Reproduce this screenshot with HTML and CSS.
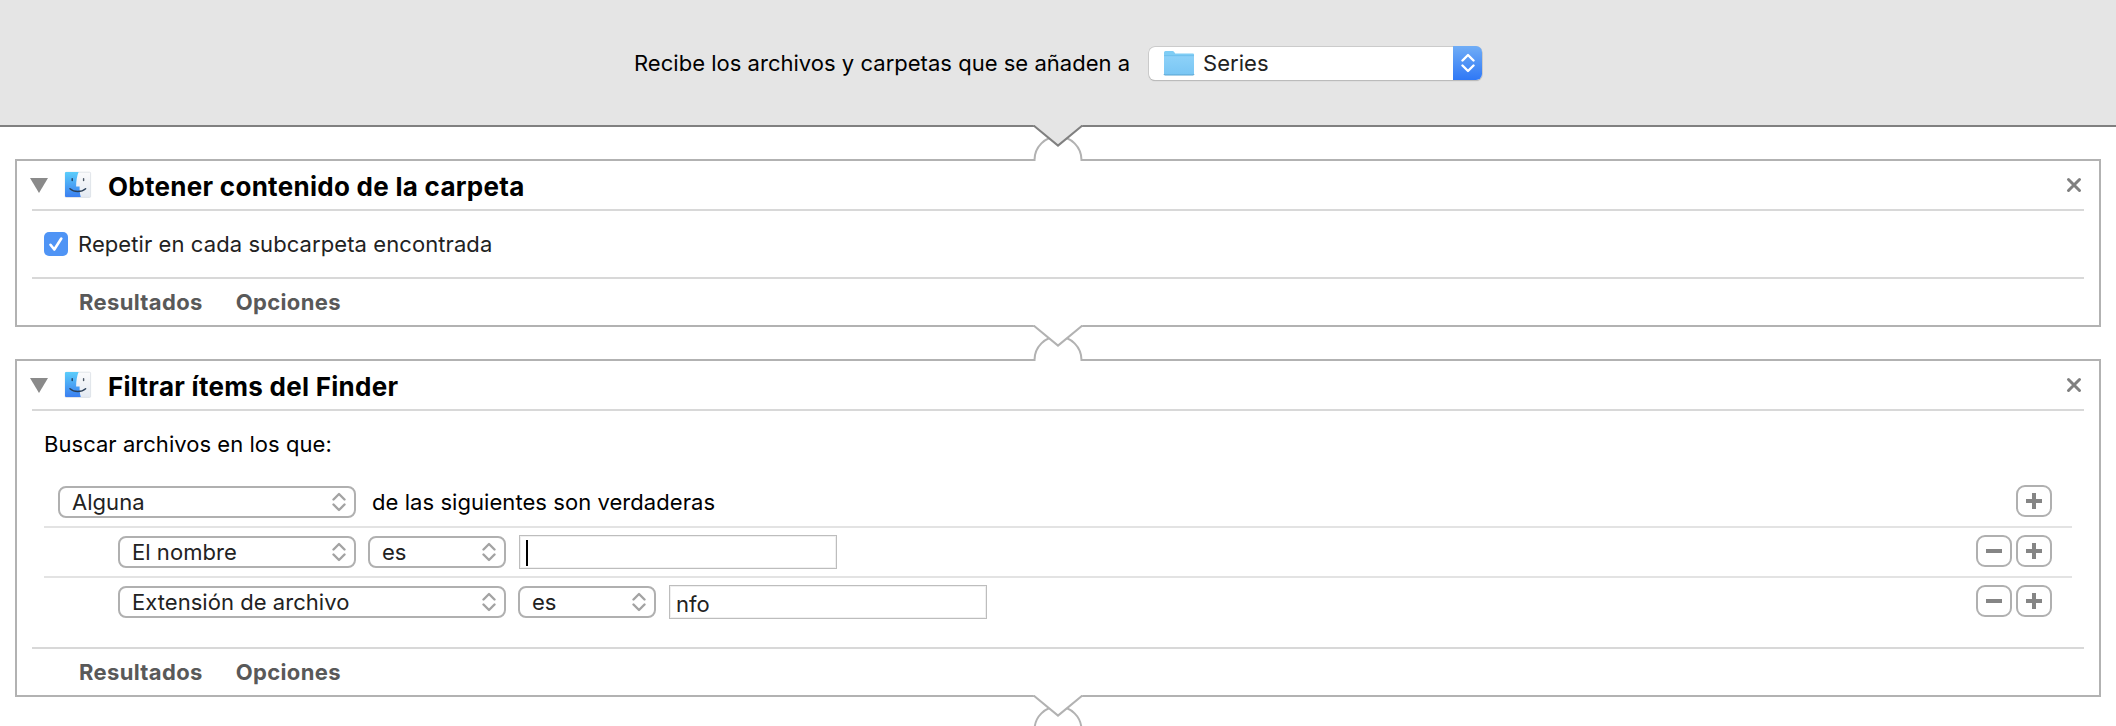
FILE: index.html
```html
<!DOCTYPE html>
<html lang="es">
<head>
<meta charset="utf-8">
<title>Automator</title>
<link rel="stylesheet" href="styles.css">
</head>
<body>
<svg class="defs" aria-hidden="true">
  <defs>
    <linearGradient id="face-blue" x1="0" y1="0" x2="0" y2="1">
      <stop offset="0" stop-color="#5bcdfb"/>
      <stop offset="1" stop-color="#3b7ff0"/>
    </linearGradient>
    <linearGradient id="face-white" x1="0" y1="0" x2="0" y2="1">
      <stop offset="0" stop-color="#fbfbfc"/>
      <stop offset="1" stop-color="#e4eaf2"/>
    </linearGradient>
    <linearGradient id="folder-front" x1="0" y1="0" x2="0" y2="1">
      <stop offset="0" stop-color="#8dd1f8"/>
      <stop offset="1" stop-color="#79c6f4"/>
    </linearGradient>
    <symbol id="finder" viewBox="0 0 28 28">
      <rect x="1.2" y="1.2" width="25.4" height="25.2" rx="1" fill="url(#face-white)" stroke="#d9dee4" stroke-width=".8"/>
      <path d="M1 2Q1 1 2 1H14.6C13 5 12.2 9.500 12.100 15.400H15.600C15.500 19 15.900 23 16.800 26H2Q1 26 1 25Z" fill="url(#face-blue)"/>
      <path d="M8.200 7.800V9.600" stroke="#1c3a5e" stroke-width="1.400" stroke-linecap="round"/>
      <path d="M19.600 7.800V9.600" stroke="#4c5866" stroke-width="1.400" stroke-linecap="round"/>
      <path d="M6 17.800C10 21.400 17.500 21.400 21.600 17.800" fill="none" stroke="#2a3f58" stroke-width="1.500" stroke-linecap="round"/>
    </symbol>
    <symbol id="chevrons" viewBox="0 0 14 20">
      <path d="M1.500 7.500L7 2L12.500 7.500M1.500 12.500L7 18L12.500 12.500" fill="none" stroke="currentColor" stroke-width="2.400" stroke-linecap="round" stroke-linejoin="round"/>
    </symbol>
    <symbol id="close" viewBox="0 0 16 16">
      <path d="M2.500 2.500L13.500 13.500M13.500 2.500L2.500 13.500" stroke="#808080" stroke-width="3" stroke-linecap="round"/>
    </symbol>
  </defs>
</svg>

<header class="source">
  <span class="source-label">Recibe los archivos y carpetas que se añaden a</span>
  <div class="folder-popup">
    <svg class="folder" viewBox="0 0 32 26">
      <path d="M1 4V2.500Q1 1 2.500 1H9.500Q10.500 1 11.200 2L12.200 3.500H30Q31 3.500 31 4.500V10H1Z" fill="#7fcdf5"/>
      <path d="M1 6H31V24Q31 25 30 25H2Q1 25 1 24Z" fill="url(#folder-front)"/>
      <path d="M1 5.700H31" stroke="#6bbbe8" stroke-width=".8"/>
      <path d="M1 24Q1 25 2 25H30Q31 25 31 24" fill="none" stroke="#58a3d0" stroke-width="1"/>
    </svg>
    <span class="folder-name">Series</span>
    <span class="folder-cap"><svg class="chev"><use href="#chevrons"/></svg></span>
  </div>
</header>

<div class="link">
  <svg class="joint" viewBox="0 0 50 36">
    <rect x="2" y="33" width="46" height="3" fill="#fff"/>
    <path d="M1.500 36V35A23.500 23.500 0 0 1 48.500 35V36" fill="#fff" stroke="#b2b2b2" stroke-width="2"/>
    <path d="M.5 0V.6L1 1L25 20.600L49 1L49.500 .6V0Z" fill="#e5e5e5"/>
    <path d="M.5 1H1.200L25 20.600L48.800 1H49.500" fill="none" stroke="#808080" stroke-width="2"/>
  </svg>
</div>

<section class="action">
  <div class="action-head">
    <svg class="tri" viewBox="0 0 18 15"><path d="M0 0H18L9 15Z" fill="#8a8a8a"/></svg>
    <svg class="finder"><use href="#finder"/></svg>
    <h2 class="title">Obtener contenido de la carpeta</h2>
    <svg class="close"><use href="#close"/></svg>
  </div>
  <div class="option">
    <span class="check"><svg class="tick" viewBox="0 0 24 24"><path d="M6.500 12.800L10.300 17.500L17.300 6.500" fill="none" stroke="#fff" stroke-width="2.600" stroke-linecap="round" stroke-linejoin="round"/></svg></span>
    <span class="option-label">Repetir en cada subcarpeta encontrada</span>
  </div>
  <div class="action-foot"><span>Resultados</span><span>Opciones</span></div>
</section>

<div class="link">
  <svg class="joint" viewBox="0 0 50 36">
    <rect x="2" y="33" width="46" height="3" fill="#fff"/>
    <path d="M1.500 36V35A23.500 23.500 0 0 1 48.500 35V36" fill="#fff" stroke="#b2b2b2" stroke-width="2"/>
    <path d="M.5 0V.6L1 1L25 20.600L49 1L49.500 .6V0Z" fill="#fff"/>
    <path d="M.5 1H1.200L25 20.600L48.800 1H49.500" fill="none" stroke="#b2b2b2" stroke-width="2"/>
  </svg>
</div>

<section class="action">
  <div class="action-head">
    <svg class="tri" viewBox="0 0 18 15"><path d="M0 0H18L9 15Z" fill="#8a8a8a"/></svg>
    <svg class="finder"><use href="#finder"/></svg>
    <h2 class="title">Filtrar ítems del Finder</h2>
    <svg class="close"><use href="#close"/></svg>
  </div>
  <div class="filter">
    <p class="intro">Buscar archivos en los que:</p>
    <div class="rule rule-main">
      <span class="popup w-any">Alguna<svg class="chev"><use href="#chevrons"/></svg></span>
      <span class="rule-text">de las siguientes son verdaderas</span>
      <span class="buttons"><i class="btn plus"></i></span>
    </div>
    <div class="rule rule-sub">
      <span class="popup w-name">El nombre<svg class="chev"><use href="#chevrons"/></svg></span>
      <span class="popup w-is">es<svg class="chev"><use href="#chevrons"/></svg></span>
      <span class="field"><span class="caret"></span></span>
      <span class="buttons"><i class="btn"></i><i class="btn plus"></i></span>
    </div>
    <div class="rule rule-sub rule-last">
      <span class="popup w-ext">Extensión de archivo<svg class="chev"><use href="#chevrons"/></svg></span>
      <span class="popup w-is">es<svg class="chev"><use href="#chevrons"/></svg></span>
      <span class="field">nfo</span>
      <span class="buttons"><i class="btn"></i><i class="btn plus"></i></span>
    </div>
  </div>
  <div class="action-foot"><span>Resultados</span><span>Opciones</span></div>
</section>

<div class="link">
  <svg class="joint" viewBox="0 0 50 36">
    <path d="M1.500 36V35A23.500 23.500 0 0 1 48.500 35V36" fill="#fff" stroke="#b2b2b2" stroke-width="2"/>
    <path d="M.5 0V.6L1 1L25 20.600L49 1L49.500 .6V0Z" fill="#fff"/>
    <path d="M.5 1H1.200L25 20.600L48.800 1H49.500" fill="none" stroke="#b2b2b2" stroke-width="2"/>
  </svg>
</div>
</body>
</html>
```
FILE: styles.css
```css
* { box-sizing: border-box; }

body {
  margin: 0;
  height: 726px;
  overflow: hidden;
  background: #fff;
  color: #000;
  font: 400 22px/32px Inter, "Liberation Sans", sans-serif;
  letter-spacing: .04px;
  white-space: nowrap;
}

svg { display: block; flex: none; }
.defs { position: absolute; width: 0; height: 0; }

/* Header */
.source {
  display: flex;
  align-items: center;
  height: 127px;
  padding: 1px 0 0 634px;
  background: #e5e5e5;
  border-bottom: 2px solid #808080;
}
.source-label { width: 515px; letter-spacing: .02px; }
.folder-popup {
  display: flex;
  align-items: center;
  width: 333px;
  height: 33px;
  padding-left: 14px;
  background: #fff;
  border-radius: 6px;
  box-shadow: 0 0 0 .7px #c2c2c2, 0 1px 1px #a0a0a0;
  color: #222;
}
.folder { width: 32px; height: 26px; }
.folder-name { flex: 1; margin-left: 8px; }
.folder-cap {
  display: flex;
  align-items: center;
  justify-content: center;
  width: 29px;
  height: 34px;
  border-radius: 0 6px 6px 0;
  background: linear-gradient(#70adf6, #2f78f6);
  color: #fff;
}
.chev { width: 14px; height: 20px; }

/* Connector between actions */
.link {
  display: flex;
  align-items: flex-start;
  height: 32px;
  padding-left: 1033px;
}
.joint { position: relative; width: 50px; height: 36px; margin-top: -2px; overflow: visible; }

/* Action cards */
.action {
  width: 2086px;
  margin-left: 15px;
  padding: 0 15px;
  border: 2px solid #b2b2b2;
  background: #fff;
}
.action-head {
  display: flex;
  align-items: flex-start;
  height: 50px;
  padding-right: 2px;
  border-bottom: 2px solid #d8d8d8;
}
.tri { width: 18px; height: 15px; margin: 17px 0 0 -2px; }
.finder { width: 28px; height: 28px; margin: 10px 0 0 16px; }
.title {
  flex: 1;
  margin: 10px 0 0 16px;
  font-size: 26px;
  font-weight: 700;
  letter-spacing: .28px;
}
.close { width: 16px; height: 16px; margin-top: 16px; }

.option {
  display: flex;
  align-items: center;
  height: 66px;
  padding-left: 12px;
  color: #222;
  letter-spacing: .08px;
}
.check { width: 24px; height: 24px; border-radius: 5px; background: #4f94f5; }
.tick { width: 24px; height: 24px; }
.option-label { margin-left: 10px; }

.action-foot {
  display: flex;
  gap: 33px;
  height: 48px;
  padding: 7px 0 0 47px;
  border-top: 2px solid #d8d8d8;
  color: #595959;
  font-weight: 700;
  letter-spacing: .35px;
}

/* Filter rules */
.filter { height: 236px; padding: 17px 12px 0; }
.intro { margin: 0 0 18px; }
.rule {
  display: flex;
  align-items: center;
  height: 50px;
  border-bottom: 2px solid #e3e3e3;
}
.rule-main { padding-left: 14px; }
.rule-sub { padding-left: 74px; }
.rule-last { border-color: transparent; }
.popup {
  display: flex;
  align-items: center;
  justify-content: space-between;
  height: 32px;
  margin-right: 12px;
  padding: 0 8px 0 12px;
  border: 2px solid #b0b0b0;
  border-radius: 8px;
  color: #222;
}
.popup .chev { color: #a3a3a3; }
.w-any { width: 298px; }
.w-name { width: 238px; }
.w-ext { width: 388px; }
.w-is { width: 138px; }
.rule-text { margin-left: 4px; letter-spacing: .06px; }
.field {
  display: flex;
  align-items: center;
  width: 318px;
  height: 34px;
  margin-left: 1px;
  padding: 4px 0 0 6px;
  border: 1px solid #bdbdbd;
  box-shadow: inset 0 0 0 1px #f0f0f0;
  color: #222;
}
.caret { width: 2px; height: 26px; margin-top: -2px; background: #000; }
.buttons { display: flex; gap: 4px; margin: -2px 20px 0 auto; }
.btn {
  width: 36px;
  height: 32px;
  border: 2px solid #b0b0b0;
  border-radius: 9px;
  background: linear-gradient(#858585, #858585) center / 16px 4px no-repeat;
}
.plus {
  background:
    linear-gradient(#858585, #858585) center / 16px 4px no-repeat,
    linear-gradient(#858585, #858585) center / 4px 16px no-repeat;
}
```
